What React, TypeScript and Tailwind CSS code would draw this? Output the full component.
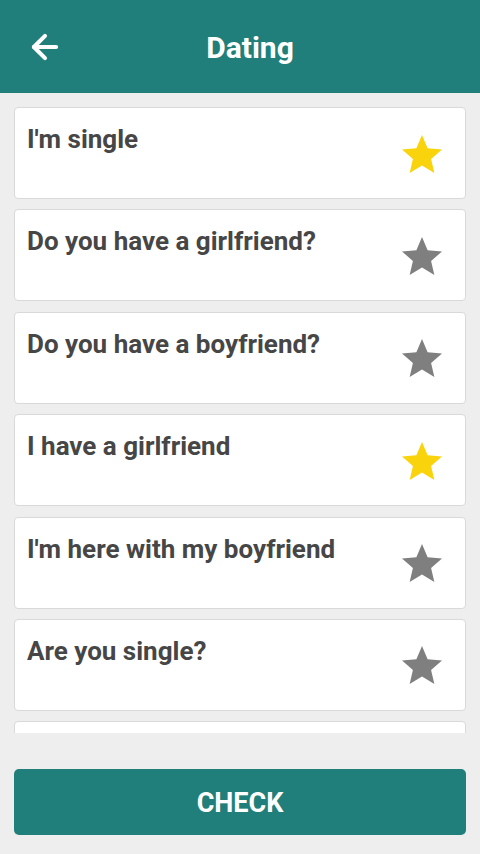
import { ArrowLeft } from 'lucide-react';

const phrases = [
  { text: "I'm single", starred: true },
  { text: 'Do you have a girlfriend?', starred: false },
  { text: 'Do you have a boyfriend?', starred: false },
  { text: 'I have a girlfriend', starred: true },
  { text: "I'm here with my boyfriend", starred: false },
  { text: 'Are you single?', starred: false },
];

function Star({ on }: { on: boolean }) {
  return (
    <svg viewBox="0 0 24 24" className="w-12 h-12 shrink-0">
      <path
        d="M12 17.27L18.18 21l-1.64-7.03L22 9.24l-7.19-.61L12 2 9.19 8.63 2 9.24l5.46 4.73L5.82 21z"
        fill={on ? '#f9d30b' : '#7f7f7f'}
      />
    </svg>
  );
}

export default function App() {
  return (
    <div className="w-[480px] h-[854px] flex flex-col bg-[#eeeeee] font-['Roboto',sans-serif] overflow-hidden">
      {/* Header */}
      <div className="h-[93px] shrink-0 bg-[#207f7a] flex items-center relative">
        <div className="absolute left-[26px] top-[28px] text-white">
          <ArrowLeft className="w-[38px] h-[38px]" strokeWidth={2.6} />
        </div>
        <h1 className="flex-1 text-center text-white text-[30px] font-bold pl-[20px] mt-[1px]">Dating</h1>
      </div>

      {/* List */}
      <div className="h-[640px] shrink-0 overflow-hidden px-[14px] pt-[14px] flex flex-col gap-[10.4px]">
        {phrases.map((p) => (
          <div
            key={p.text}
            className="h-[92px] shrink-0 bg-white border border-[#d9d9d9] rounded-[4px] flex items-center justify-between pl-[12px] pr-[19px]"
          >
            <p className="self-start pt-[16px] text-[26px] font-bold text-[#464646] leading-[30px] whitespace-nowrap">
              {p.text}
            </p>
            <div className="mt-[3px]">
              <Star on={p.starred} />
            </div>
          </div>
        ))}
        {/* next card, cut off by the scroll area */}
        <div className="h-[92px] shrink-0 bg-white border border-[#d9d9d9] rounded-[4px]" />
      </div>

      {/* Button */}
      <div className="flex-1 px-[14px] pt-[36px]">
        <button className="w-full h-[66px] bg-[#207f7a] rounded-[5px] text-white text-[27px] font-bold pt-[3px]">
          CHECK
        </button>
      </div>
    </div>
  );
}
